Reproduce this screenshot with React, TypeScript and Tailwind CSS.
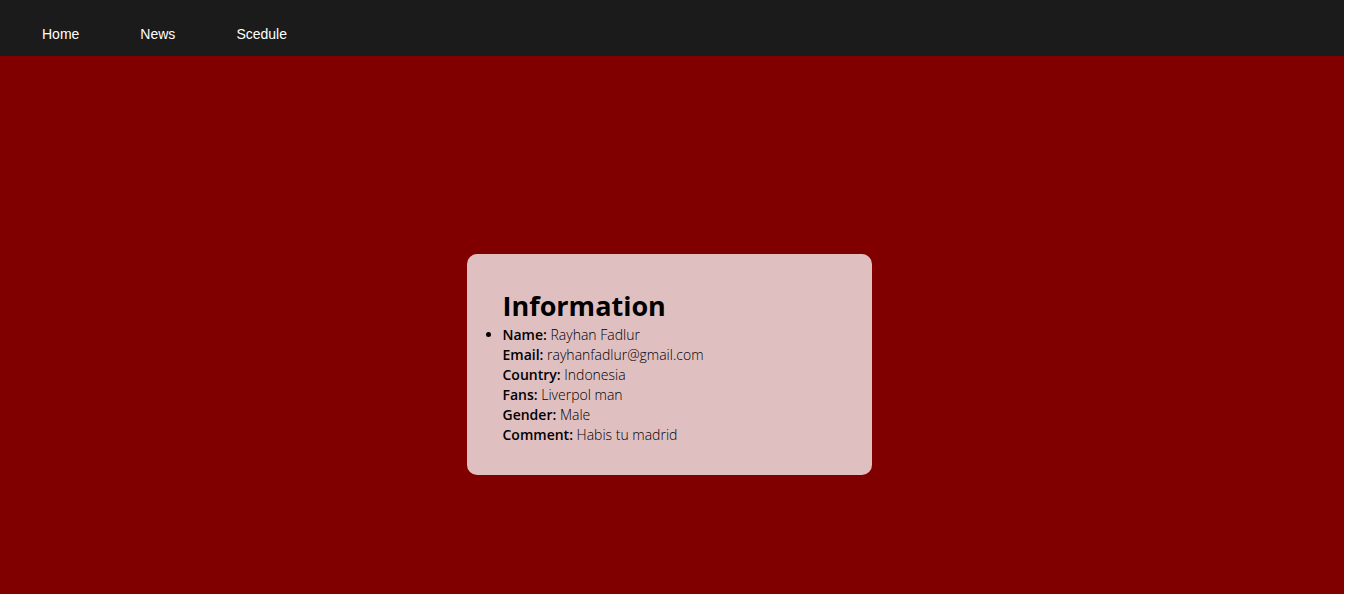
const links = ["Home", "News", "Scedule"];

const details = [
  ["Name:", "Rayhan Fadlur"],
  ["Email:", "rayhanfadlur@gmail.com"],
  ["Country:", "Indonesia"],
  ["Fans:", "Liverpol man"],
  ["Gender:", "Male"],
  ["Comment:", "Habis tu madrid"],
];

export default function App() {
  return (
    <div className="flex min-h-screen flex-col border-r border-white bg-[#800000] font-['Open_Sans',sans-serif] text-black">
      <nav className="flex h-14 items-center gap-[61px] bg-[#1b1b1b] px-[42px] pt-3 font-['Liberation_Sans',Arial,sans-serif] text-sm font-medium text-white">
        {links.map((label) => (
          <a key={label} href="#">
            {label}
          </a>
        ))}
      </nav>
      <main className="flex flex-1 justify-center pt-[198px] pr-[22px] pb-8 pl-4">
        <section className="w-full max-w-[405px] self-start rounded-[10px] bg-[#e0bfc0] pt-8 pr-8 pb-[30px] pl-9">
          <h1 className="text-[27px] leading-[39px] font-bold">Information</h1>
          <ul className="list-disc text-sm leading-5 font-light">
            <li>
              {details.map(([name, value]) => (
                <p key={name}>
                  <strong className="font-semibold">{name}</strong> {value}
                </p>
              ))}
            </li>
          </ul>
        </section>
      </main>
    </div>
  );
}
